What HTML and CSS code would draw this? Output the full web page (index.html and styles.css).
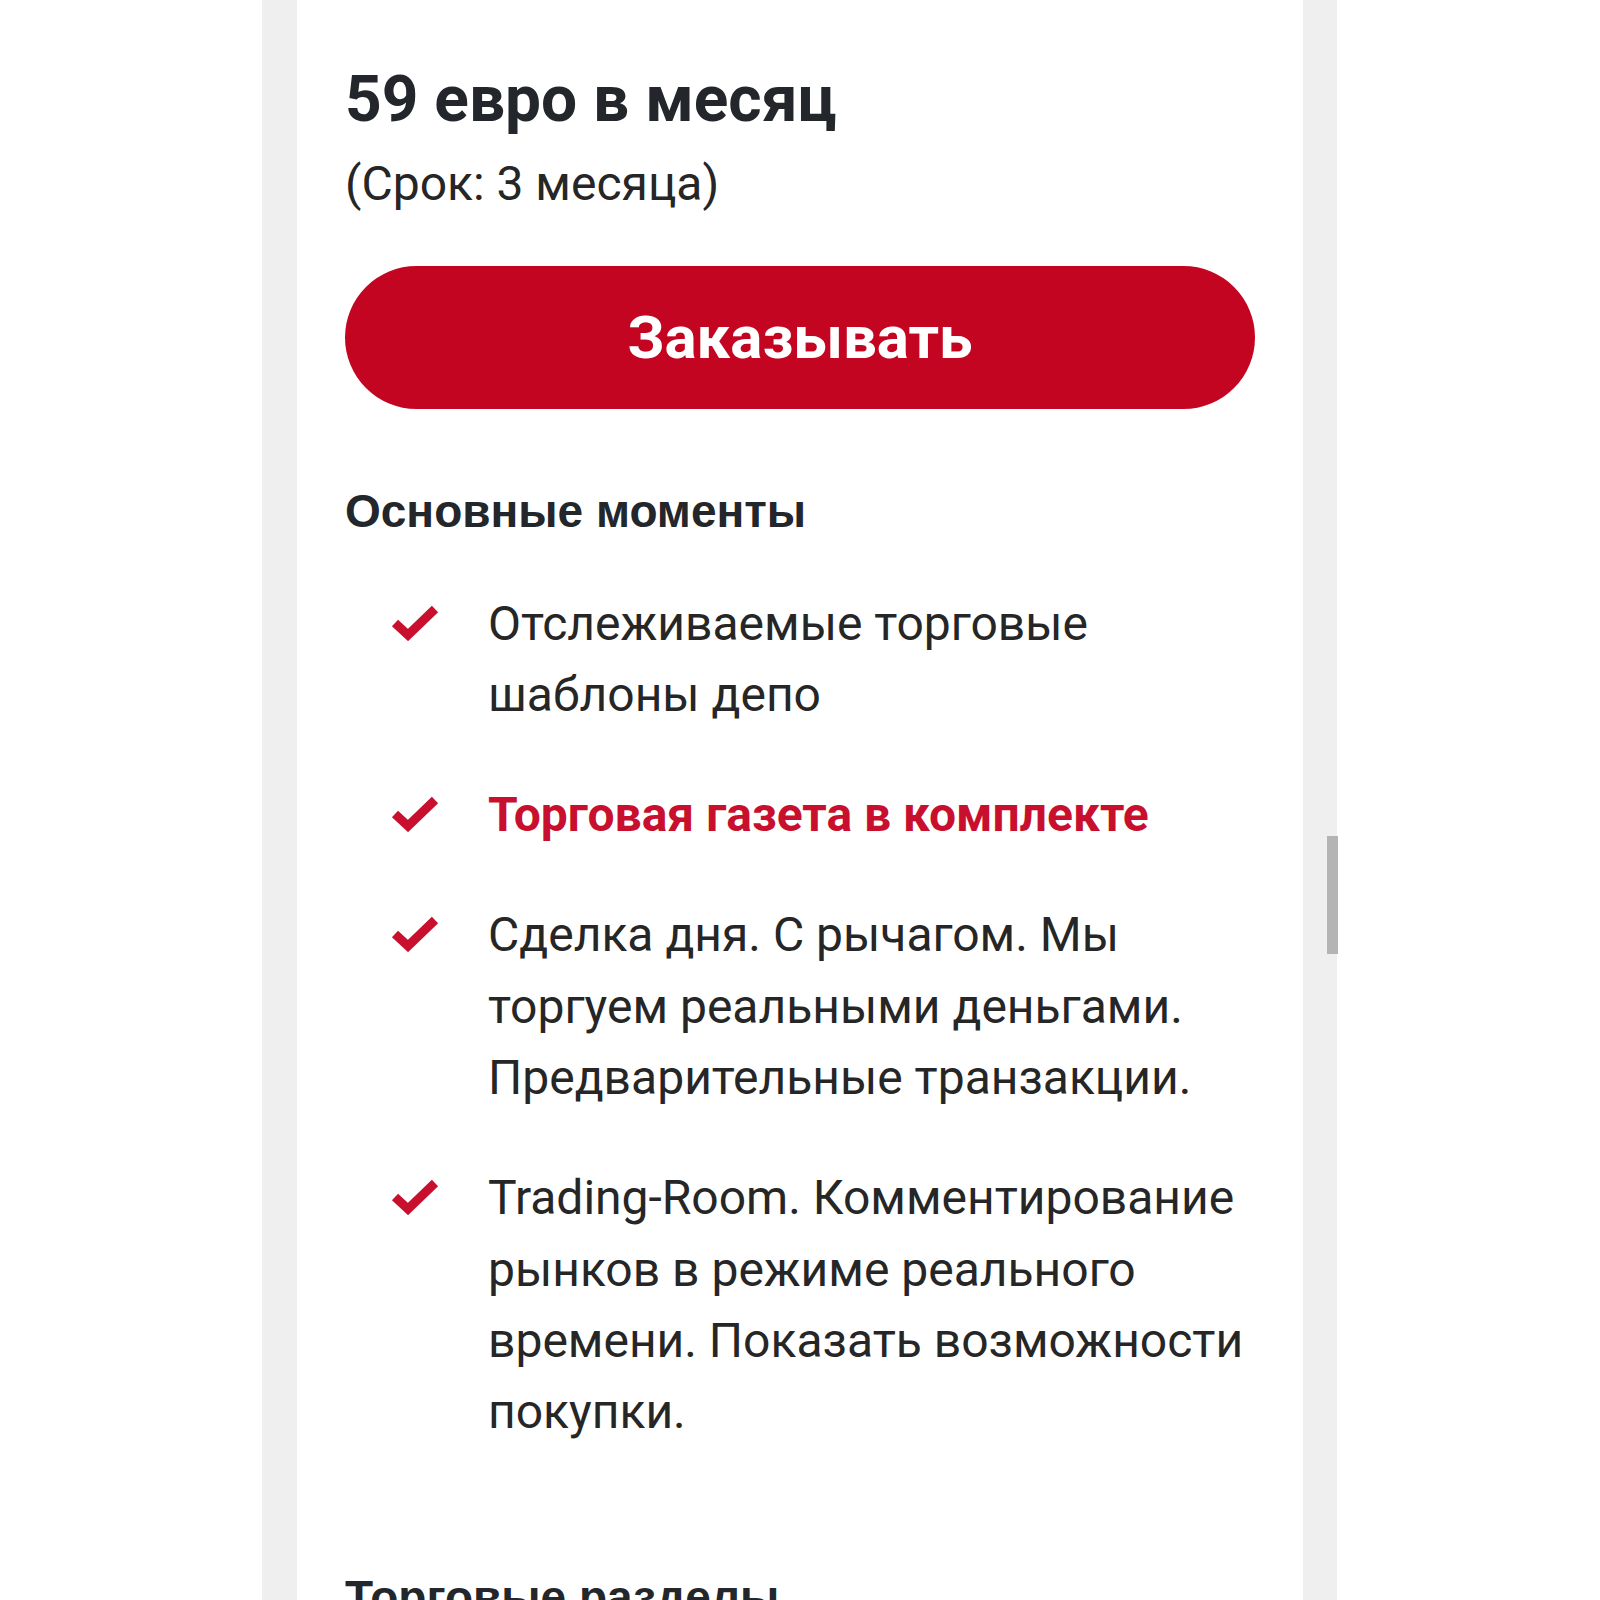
FILE: index.html
```html
<!DOCTYPE html>
<html lang="ru">
<head>
<meta charset="utf-8">
<title>Тариф</title>
<link rel="stylesheet" href="styles.css">
</head>
<body>
<div class="page">
  <div class="card">
    <h1 class="price">59 евро в месяц</h1>
    <p class="term">(Срок: 3 месяца)</p>
    <a class="order" href="#">Заказывать</a>
    <h2 class="section">Основные моменты</h2>
    <ul class="features">
      <li class="feature">
        <svg class="check" viewBox="0 0 48 36" aria-hidden="true"><polyline points="4,18 17,30 44,4"/></svg>
        <span class="feature-text">Отслеживаемые торговые шаблоны депо</span>
      </li>
      <li class="feature">
        <svg class="check" viewBox="0 0 48 36" aria-hidden="true"><polyline points="4,18 17,30 44,4"/></svg>
        <span class="feature-text highlight">Торговая газета в комплекте</span>
      </li>
      <li class="feature">
        <svg class="check" viewBox="0 0 48 36" aria-hidden="true"><polyline points="4,18 17,30 44,4"/></svg>
        <span class="feature-text">Сделка дня. С рычагом. Мы торгуем реальными деньгами. Предварительные транзакции.</span>
      </li>
      <li class="feature">
        <svg class="check" viewBox="0 0 48 36" aria-hidden="true"><polyline points="4,18 17,30 44,4"/></svg>
        <span class="feature-text">Trading-Room. Комментирование рынков в режиме реального времени. Показать возможности покупки.</span>
      </li>
    </ul>
    <h2 class="section next">Торговые разделы</h2>
  </div>
  <div class="scroll-thumb"></div>
</div>
</body>
</html>
```
FILE: styles.css
```css
html, body {
  margin: 0;
  padding: 0;
  background: #ffffff;
}
body {
  height: 1600px;
  overflow: hidden;
  font-family: Roboto, "Noto Sans", sans-serif;
  color: #262626;
}
.page {
  position: relative;
  margin-left: 262px;
  width: 1006px;
  padding: 0 34px 0 35px;
  background: #efefef;
  min-height: 1600px;
}
.card {
  background: #ffffff;
  min-height: 1600px;
  padding: 62px 48px 0 48px;
  box-sizing: border-box;
}
.price {
  margin: 0;
  font-family: Roboto, sans-serif;
  font-weight: 700;
  font-size: 64px;
  line-height: 76px;
  color: #23262a;
}
.term {
  margin: 16px 0 0 0;
  font-size: 48px;
  line-height: 60px;
  color: #262626;
}
.order {
  display: flex;
  align-items: center;
  justify-content: center;
  height: 143px;
  margin: 52px 0 0 0;
  border-radius: 72px;
  background: #c40521;
  color: #ffffff;
  text-decoration: none;
  font-family: Roboto, sans-serif;
  font-weight: 700;
  font-size: 60px;
}
.section {
  margin: 74px 0 0 0;
  font-family: "Liberation Sans", Arial, sans-serif;
  font-weight: 700;
  font-size: 46px;
  line-height: 56px;
  color: #23262a;
}
.features {
  list-style: none;
  margin: 49px 0 0 0;
  padding: 0;
  display: flex;
  flex-direction: column;
  gap: 48.6px;
}
.feature {
  display: flex;
  align-items: flex-start;
  font-size: 48px;
  line-height: 71.4px;
}
.check {
  flex: none;
  width: 48px;
  height: 36px;
  margin: 17px 49px 0 46px;
  fill: none;
  stroke: #c8102e;
  stroke-width: 9;
}
.feature-text {
  color: #262626;
}
.highlight {
  color: #c8102e;
  font-weight: 700;
}
.next {
  margin-top: 121px;
}
.scroll-thumb {
  position: absolute;
  left: 1065px;
  top: 836px;
  width: 11px;
  height: 118px;
  background: #b4b4b4;
}
```
